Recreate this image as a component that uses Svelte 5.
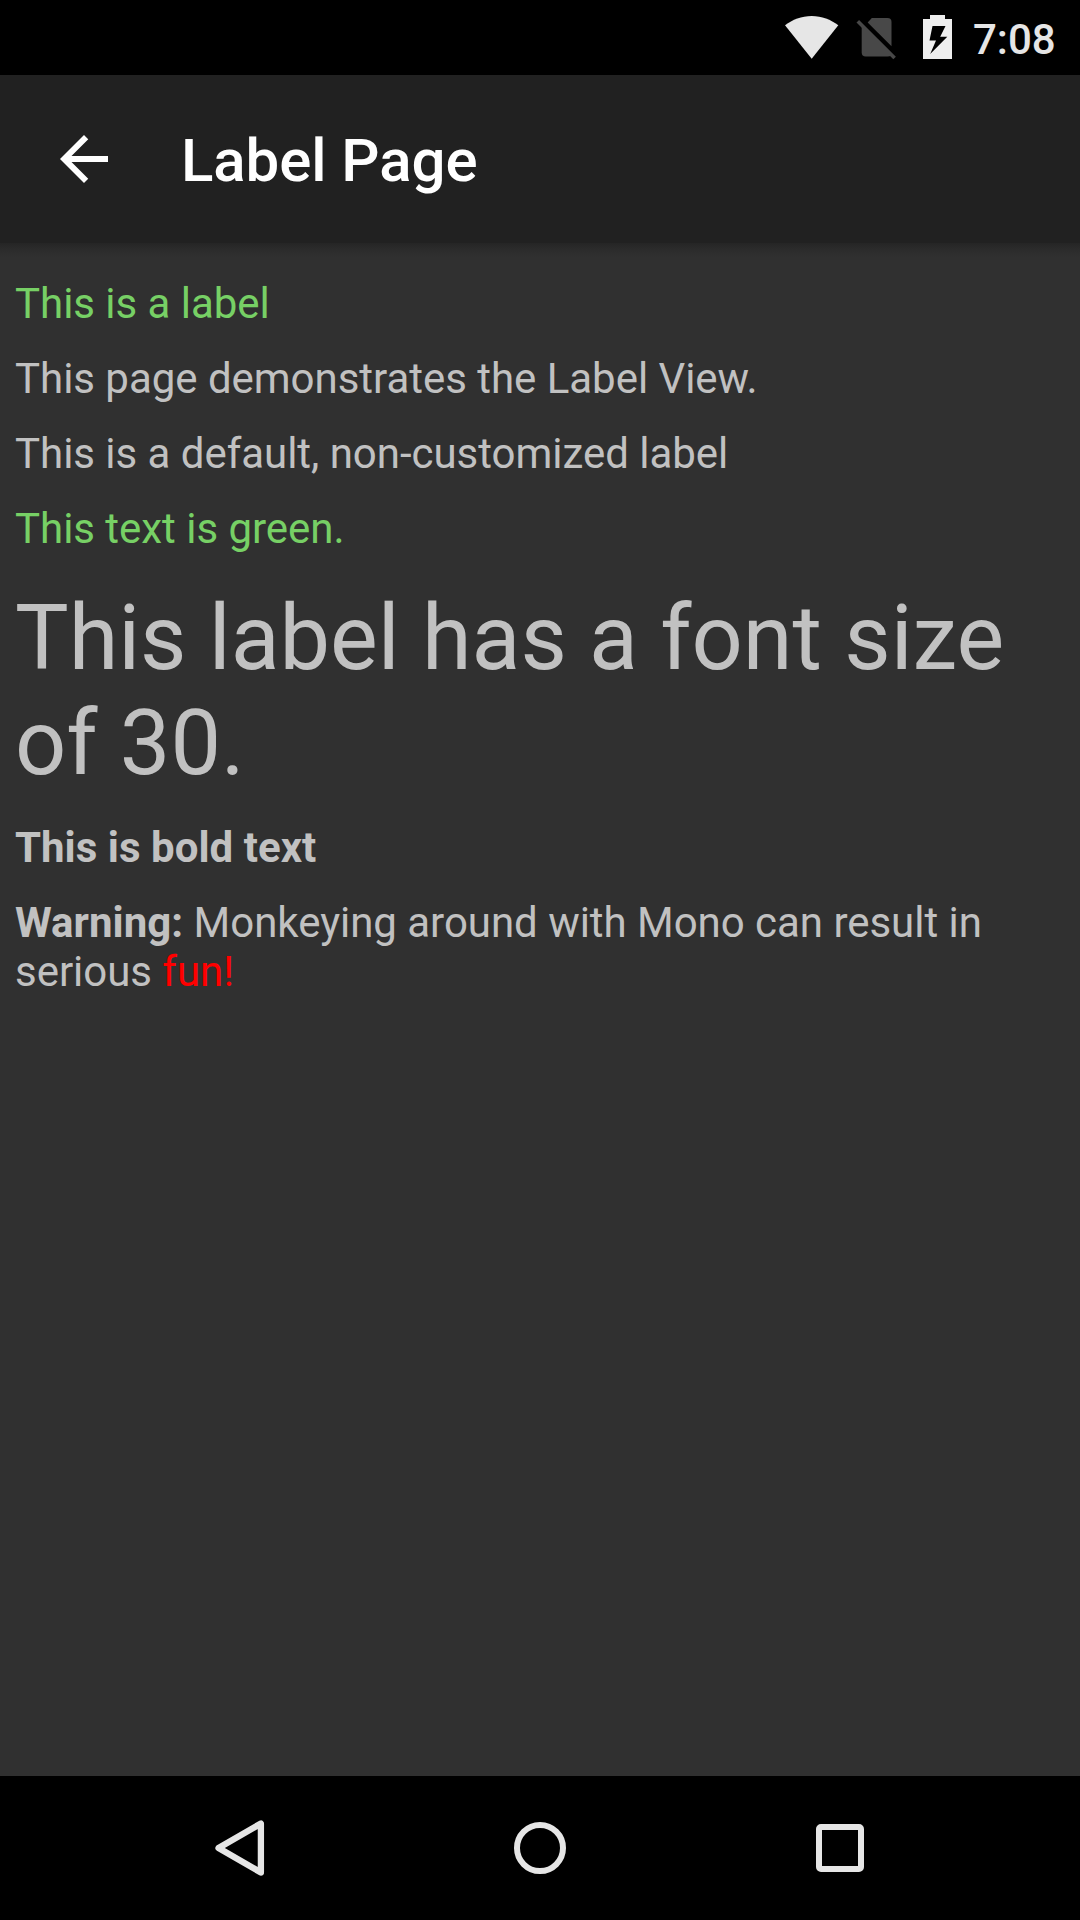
<script>
  const time = '7:08';
  const title = 'Label Page';
</script>

<div class="screen">
  <div class="status">
    <svg class="wifi" width="54" height="44" viewBox="0 0 54 44">
      <path d="M0 9.3C7.500 3.500 16.500 0 26.700 0S45.700 3.500 53.300 9.300L26.700 42.700Z" fill="#e6e6e6" />
    </svg>
    <svg class="sim" width="40" height="44" viewBox="0 0 40 44">
      <path d="M15.800 1H31.500A4 4 0 0 1 35.500 5V29.300L11.700 5.500Z" fill="#484848" />
      <path d="M5.700 8.500L35.200 38Q34 39.500 31.500 39.500H9.700A4 4 0 0 1 5.700 35.500Z" fill="#484848" />
      <path d="M1.800 4.200L38.600 41" stroke="#484848" stroke-width="3.600" fill="none" />
    </svg>
    <svg class="battery" width="29" height="44" viewBox="0 0 29 44">
      <path fill="#eee" fill-rule="evenodd" d="M7 0H22V4H29V44H0V4H7ZM9.500 11L6.500 25.500H13L7.200 39L24.300 21.800H17.200L22.500 11Z" />
    </svg>
    <span class="time">{time}</span>
  </div>

  <header class="appbar">
    <svg width="72" height="72" viewBox="0 0 24 24">
      <path fill="#fff" d="M20 11H7.830l5.590-5.590L12 4l-8 8 8 8 1.410-1.410L7.830 13H20v-2z" />
    </svg>
    <h1>{title}</h1>
  </header>

  <main>
    <p class="green">This is a label</p>
    <p>This page demonstrates the Label View.</p>
    <p>This is a default, non-customized label</p>
    <p class="green">This text is green.</p>
    <p class="large">This label has a font size of 30.</p>
    <p><b>This is bold text</b></p>
    <p><b>Warning:</b> Monkeying around with Mono can result in serious <span class="red">fun!</span></p>
  </main>

  <nav>
    <svg width="72" height="72" viewBox="0 0 72 72">
      <path d="M56.900 11.500V60.500L14.500 36Z" fill="none" stroke="#e6e6e6" stroke-width="6.300" stroke-linejoin="round" />
    </svg>
    <svg width="72" height="72" viewBox="0 0 72 72">
      <circle cx="36" cy="36" r="23" fill="none" stroke="#e6e6e6" stroke-width="6" />
    </svg>
    <svg width="72" height="72" viewBox="0 0 72 72">
      <path fill="#e6e6e6" fill-rule="evenodd" d="M17 12H55A5 5 0 0 1 60 17V55A5 5 0 0 1 55 60H17A5 5 0 0 1 12 55V17A5 5 0 0 1 17 12ZM18 18V54H54V18Z" />
    </svg>
  </nav>
</div>

<style>
  :global(body) {
    margin: 0;
    background: #303030;
  }
  .screen {
    width: 1080px;
    height: 1920px;
    display: flex;
    flex-direction: column;
    background: #303030;
    color: #c1c1c1;
    font-family: Roboto, sans-serif;
    overflow: hidden;
  }
  svg {
    display: block;
    flex: none;
  }
  .status {
    box-sizing: border-box;
    height: 75px;
    flex: none;
    background: #000;
    display: flex;
    align-items: flex-start;
    padding: 15px 0 0 785px;
  }
  .wifi {
    margin-top: 1px;
  }
  .sim {
    margin: 2px 0 0 17px;
  }
  .battery {
    margin-left: 27px;
  }
  .time {
    margin-left: 21px;
    font-size: 42px;
    line-height: 49px;
    font-weight: 500;
    color: #e6e6e6;
  }
  .appbar {
    height: 168px;
    flex: none;
    background: #212121;
    display: flex;
    align-items: center;
    padding-left: 48px;
    gap: 61px;
  }
  h1 {
    margin: 4px 0 0;
    font-size: 60px;
    line-height: 70px;
    font-weight: 500;
    letter-spacing: -0.08px;
    color: #fff;
  }
  main {
    flex: 1;
    padding: 36px 15px 0;
    background: linear-gradient(#252525, #2b2b2b 6px, #303030 14px);
  }
  p {
    margin: 0 0 26px;
    font-size: 42px;
    line-height: 49px;
    letter-spacing: -0.03px;
  }
  b {
    font-weight: 700;
    letter-spacing: 0.03px;
  }
  .green {
    color: #77d065;
  }
  .red {
    color: #f00;
  }
  .large {
    margin: 33px 0 27px;
    font-size: 90px;
    line-height: 105px;
  }
  nav {
    height: 144px;
    flex: none;
    background: #000;
    display: flex;
    align-items: center;
    justify-content: center;
    gap: 228px;
  }
</style>
